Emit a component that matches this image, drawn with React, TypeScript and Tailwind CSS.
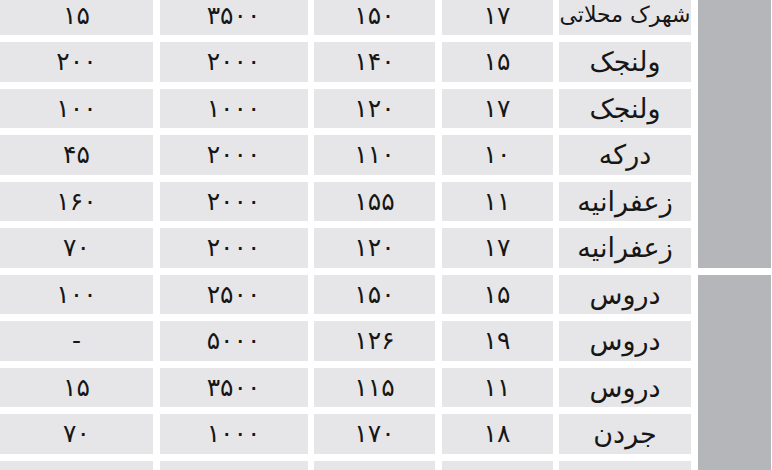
import React from 'react';

type Row = [string, string, string, string, string];

// ordered left to right on screen: A, B, C, D, name
const ROWS: Row[] = [
  ['۱۵', '۳۵۰۰', '۱۵۰', '۱۷', 'شهرک محلاتی'],
  ['۲۰۰', '۲۰۰۰', '۱۴۰', '۱۵', 'ولنجک'],
  ['۱۰۰', '۱۰۰۰', '۱۲۰', '۱۷', 'ولنجک'],
  ['۴۵', '۲۰۰۰', '۱۱۰', '۱۰', 'درکه'],
  ['۱۶۰', '۲۰۰۰', '۱۵۵', '۱۱', 'زعفرانیه'],
  ['۷۰', '۲۰۰۰', '۱۲۰', '۱۷', 'زعفرانیه'],
  ['۱۰۰', '۲۵۰۰', '۱۵۰', '۱۵', 'دروس'],
  ['-', '۵۰۰۰', '۱۲۶', '۱۹', 'دروس'],
  ['۱۵', '۳۵۰۰', '۱۱۵', '۱۱', 'دروس'],
  ['۷۰', '۱۰۰۰', '۱۷۰', '۱۸', 'جردن'],
  ['', '', '', '', ''],
];

const sizeFor = (j: number, text: string) => {
  if (j !== 4) return 'text-[25px]';
  return text.length > 8 ? 'text-[22px]' : 'text-[27px]';
};

export default function App() {
  return (
    <div className="w-[772px] h-[470px] overflow-hidden bg-white" style={{ fontFamily: '"DejaVu Sans", "Noto Sans", sans-serif' }}>
      <div className="-mt-[4.5px] grid grid-cols-[153px_148px_121px_111px_132px_73px] grid-rows-[repeat(11,39.5px)] gap-x-[6.5px] gap-y-[7px]">
        <div className="col-start-6 row-start-1 row-span-6 bg-[#b5b6ba]" />
        <div className="col-start-6 row-start-7 row-span-5 bg-[#b5b6ba]" />
        {ROWS.map((row, i) =>
          row.map((cell, j) => (
            <div
              key={`${i}-${j}`}
              dir="rtl"
              className={`flex items-center justify-center whitespace-nowrap bg-[#e6e6e8] text-[#161616] leading-none ${sizeFor(j, cell)}`}
              style={{ gridColumnStart: j + 1, gridRowStart: i + 1 }}
            >
              {cell}
            </div>
          ))
        )}
      </div>
    </div>
  );
}
